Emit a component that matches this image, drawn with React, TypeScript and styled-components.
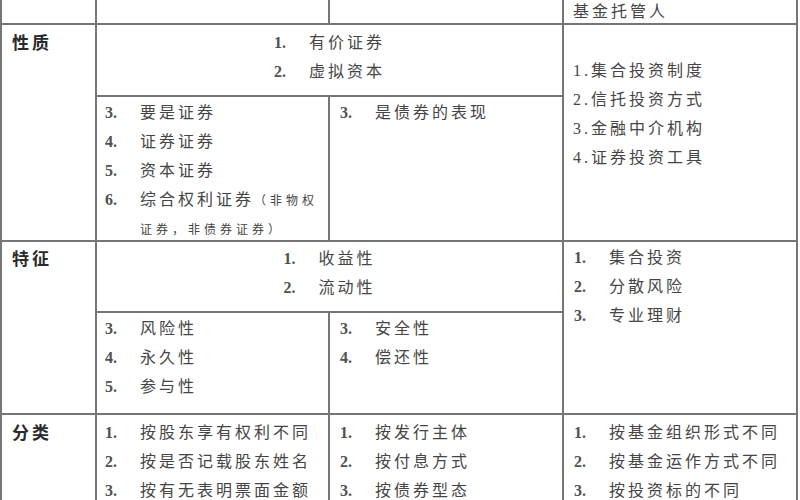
import styled, { createGlobalStyle } from 'styled-components';

const GlobalStyle = createGlobalStyle`
  html, body {
    margin: 0;
    padding: 0;
    background: #ffffff;
    overflow: hidden;
  }
  body {
    width: 800px;
    height: 500px;
    font-family: "Liberation Serif", "Noto Sans CJK SC", serif;
    color: #454545;
  }
`;

type Item = { n: string; text: React.ReactNode };

function Sheet(): React.ReactElement {
  return (
    <Grid>
      <Cell $col="1" $row="1" />
      <Cell $col="2" $row="1" />
      <Cell $col="3" $row="1" />
      <Cell $col="4" $row="1" $pad="0 0 0 9px">
        <Line $lh={23}>基金托管人</Line>
      </Cell>

      <Cell $col="1" $row="2 / 4" $pad="2px 0 0 10px">
        <Label>性质</Label>
      </Cell>
      <Cell $col="2 / 4" $row="2" $pad="2px 0 0 0">
        <List items={[{ n: '1.', text: '有价证券' }, { n: '2.', text: '虚拟资本' }]} center />
      </Cell>
      <Cell $col="2" $row="3" $pad="0 0 0 8px">
        <List
          items={[
            { n: '3.', text: '要是证券' },
            { n: '4.', text: '证券证券' },
            { n: '5.', text: '资本证券' },
            {
              n: '6.',
              text: (
                <>
                  综合权利证券<Small>（非物权</Small>
                </>
              ),
            },
            { n: '', text: <Small>证券，非债券证券）</Small> },
          ]}
        />
      </Cell>
      <Cell $col="3" $row="3" $pad="0 0 0 10px">
        <List items={[{ n: '3.', text: '是债券的表现' }]} />
      </Cell>
      <Cell $col="4" $row="2 / 4" $pad="31px 0 0 9px">
        <Line>1.集合投资制度</Line>
        <Line>2.信托投资方式</Line>
        <Line>3.金融中介机构</Line>
        <Line>4.证券投资工具</Line>
      </Cell>

      <Cell $col="1" $row="4 / 6" $pad="1px 0 0 10px">
        <Label>特征</Label>
      </Cell>
      <Cell $col="2 / 4" $row="4" $pad="1px 0 0 0">
        <List items={[{ n: '1.', text: '收益性' }, { n: '2.', text: '流动性' }]} center />
      </Cell>
      <Cell $col="2" $row="5" $pad="0 0 0 8px">
        <List
          items={[
            { n: '3.', text: '风险性' },
            { n: '4.', text: '永久性' },
            { n: '5.', text: '参与性' },
          ]}
        />
      </Cell>
      <Cell $col="3" $row="5" $pad="0 0 0 10px">
        <List
          items={[
            { n: '3.', text: '安全性' },
            { n: '4.', text: '偿还性' },
          ]}
        />
      </Cell>
      <Cell $col="4" $row="4 / 6" $pad="0 0 0 10px">
        <List
          items={[
            { n: '1.', text: '集合投资' },
            { n: '2.', text: '分散风险' },
            { n: '3.', text: '专业理财' },
          ]}
        />
      </Cell>

      <Cell $col="1" $row="6" $pad="2px 0 0 10px">
        <Label>分类</Label>
      </Cell>
      <Cell $col="2" $row="6" $pad="2px 0 0 8px">
        <List
          items={[
            { n: '1.', text: '按股东享有权利不同' },
            { n: '2.', text: '按是否记载股东姓名' },
            { n: '3.', text: '按有无表明票面金额' },
          ]}
        />
      </Cell>
      <Cell $col="3" $row="6" $pad="2px 0 0 10px">
        <List
          items={[
            { n: '1.', text: '按发行主体' },
            { n: '2.', text: '按付息方式' },
            { n: '3.', text: '按债券型态' },
          ]}
        />
      </Cell>
      <Cell $col="4" $row="6" $pad="2px 0 0 10px">
        <List
          items={[
            { n: '1.', text: '按基金组织形式不同' },
            { n: '2.', text: '按基金运作方式不同' },
            { n: '3.', text: '按投资标的不同' },
          ]}
        />
      </Cell>
    </Grid>
  );
}

function List({ items, center }: { items: Item[]; center?: boolean }): React.ReactElement {
  return (
    <>
      {items.map((it, i) => (
        <Row key={i} $center={center}>
          <Num>{it.n}</Num>
          <Text>{it.text}</Text>
        </Row>
      ))}
    </>
  );
}

export default function App(): React.ReactElement {
  return (
    <>
      <GlobalStyle />
      <Sheet />
    </>
  );
}

const Grid = styled.div`
  display: grid;
  grid-template-columns: 93px 231px 232px 232px;
  grid-template-rows: 23px 70px 143px 69px 100px 100px;
  gap: 2px;
  width: 794px;
  padding: 0 2px;
  background-color: #767676;
`;

const Cell = styled.div<{ $col: string; $row: string; $pad?: string }>`
  grid-column: ${({ $col }) => $col};
  grid-row: ${({ $row }) => $row};
  padding: ${({ $pad }) => $pad || '0'};
  background-color: #ffffff;
  overflow: hidden;
`;

const Label = styled.div`
  font-family: "Noto Sans CJK SC", sans-serif;
  font-size: 17px;
  font-weight: 700;
  letter-spacing: 3px;
  line-height: 29px;
  color: #2a2a2a;
`;

const Line = styled.div<{ $lh?: number }>`
  font-family: "Liberation Serif", "Noto Sans CJK SC", serif;
  font-size: 16px;
  letter-spacing: 3px;
  line-height: ${({ $lh }) => $lh || 29}px;
  white-space: nowrap;
`;

const Row = styled.div<{ $center?: boolean }>`
  display: flex;
  justify-content: ${({ $center }) => ($center ? 'center' : 'flex-start')};
  align-items: baseline;
  height: 29px;
  line-height: 29px;
  white-space: nowrap;
`;

const Num = styled.span`
  display: inline-block;
  width: 35px;
  font-family: "Liberation Serif", serif;
  font-size: 16px;
  font-weight: 700;
  color: #505050;
`;

const Text = styled.span`
  font-family: "Noto Sans CJK SC", sans-serif;
  font-size: 16px;
  letter-spacing: 3px;
`;

const Small = styled.span`
  font-size: 12px;
  letter-spacing: 4px;
`;
